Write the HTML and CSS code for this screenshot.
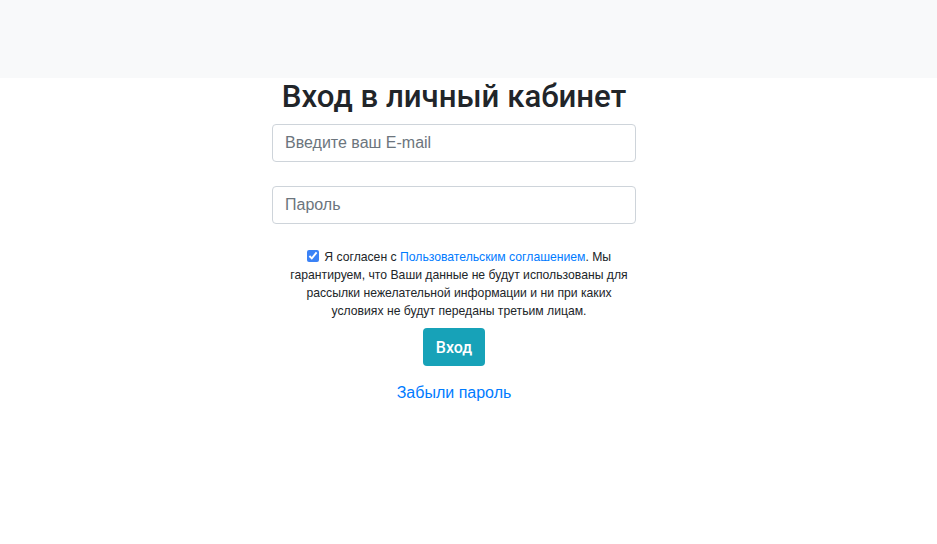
FILE: index.html
```html
<!DOCTYPE html>
<html lang="ru">
<head>
<meta charset="UTF-8">
<meta name="viewport" content="width=device-width, initial-scale=1.0">
<title>Вход в личный кабинет</title>
<link rel="stylesheet" href="styles.css">
</head>
<body>
<header class="topbar"></header>

<main class="login">
  <h1 class="login-title">Вход в личный кабинет</h1>
  <form class="login-form">
    <div class="form-group">
      <input type="email" class="form-control" placeholder="Введите ваш E-mail">
    </div>
    <div class="form-group">
      <input type="password" class="form-control" placeholder="Пароль">
    </div>
    <p class="agreement">
      <input type="checkbox" class="agree-check" checked>
      Я согласен с <a href="#">Пользовательским соглашением</a>. Мы гарантируем, что Ваши данные не будут использованы для рассылки нежелательной информации и ни при каких условиях не будут переданы третьим лицам.
    </p>
    <button type="submit" class="btn-login">Вход</button>
    <a href="#" class="forgot">Забыли пароль</a>
  </form>
</main>
</body>
</html>
```

FILE: styles.css
```css
body {
  margin: 0;
  font-family: "Liberation Sans", Arial, sans-serif;
  color: #212529;
  background: #fff;
}

.topbar {
  height: 78px;
  background-color: #f8f9fa;
}

.login {
  width: 364px;
  margin-left: 272px;
}

.login-title {
  margin: 0 0 8px;
  font-family: Roboto, "Liberation Sans", sans-serif;
  font-size: 31.2px;
  font-weight: 500;
  line-height: 38px;
  text-align: center;
}

.login-form {
  display: flex;
  flex-direction: column;
  align-items: center;
}

.form-group {
  width: 100%;
  margin-bottom: 24px;
}

.form-control {
  display: block;
  width: 100%;
  height: 38px;
  box-sizing: border-box;
  padding: 6px 12px;
  font-family: inherit;
  font-size: 16px;
  color: #495057;
  border: 1px solid #ced4da;
  border-radius: 4px;
}

.form-control::placeholder {
  color: #6c757d;
}

.agreement {
  margin: 0 0 8px;
  padding: 0 2px 0 12px;
  font-size: 12.2px;
  line-height: 18px;
  text-align: center;
}

.agreement a {
  color: #007bff;
  text-decoration: none;
}

.agree-check {
  width: 12px;
  height: 12px;
  margin: 0 2px 0 0;
  vertical-align: -1px;
  accent-color: #3b82f6;
}

.btn-login {
  height: 38px;
  padding: 0 13px;
  font-family: Roboto, "Liberation Sans", sans-serif;
  font-size: 16px;
  font-weight: 500;
  color: #fff;
  background-color: #17a2b8;
  border: none;
  border-radius: 4px;
  cursor: pointer;
}

.forgot {
  margin-top: 18px;
  font-size: 16px;
  color: #007bff;
  text-decoration: none;
}
```
